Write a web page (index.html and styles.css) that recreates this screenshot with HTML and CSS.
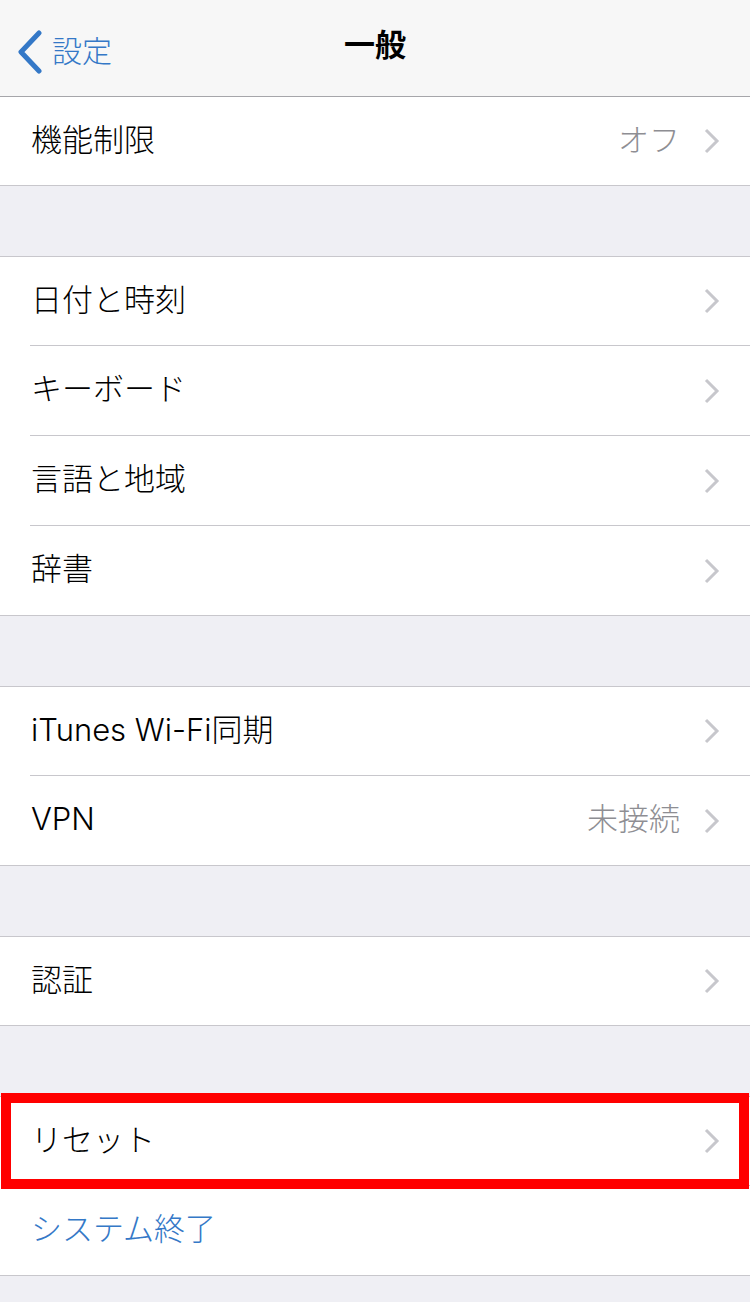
FILE: index.html
```html
<!DOCTYPE html>
<html lang="ja">
<head>
    <meta charset="UTF-8">
    <meta name="viewport" content="width=device-width, initial-scale=1.0">
    <title>一般</title>
    <link rel="stylesheet" href="styles.css">
</head>
<body>
    <header class="navbar">
        <a class="back" href="#">
            <svg class="back-icon" width="26" height="44" viewBox="0 0 26 44">
                <polyline points="22,3 4,22 22,41" fill="none" stroke="#3478c7" stroke-width="5" stroke-linecap="round" stroke-linejoin="round"/>
            </svg>
            <span>設定</span>
        </a>
        <h1 class="title">一般</h1>
    </header>

    <section class="group first">
        <div class="row">
            <div class="row-body">
                <span class="label">機能制限</span>
                <span class="value">オフ</span>
                <svg class="chevron" width="16" height="26" viewBox="0 0 16 26"><polyline points="2,2 13,13 2,24" fill="none" stroke="#c7c7cc" stroke-width="3"/></svg>
            </div>
        </div>
    </section>

    <section class="group">
        <div class="row">
            <div class="row-body">
                <span class="label">日付と時刻</span>
                <svg class="chevron" width="16" height="26" viewBox="0 0 16 26"><polyline points="2,2 13,13 2,24" fill="none" stroke="#c7c7cc" stroke-width="3"/></svg>
            </div>
        </div>
        <div class="row">
            <div class="row-body">
                <span class="label">キーボード</span>
                <svg class="chevron" width="16" height="26" viewBox="0 0 16 26"><polyline points="2,2 13,13 2,24" fill="none" stroke="#c7c7cc" stroke-width="3"/></svg>
            </div>
        </div>
        <div class="row">
            <div class="row-body">
                <span class="label">言語と地域</span>
                <svg class="chevron" width="16" height="26" viewBox="0 0 16 26"><polyline points="2,2 13,13 2,24" fill="none" stroke="#c7c7cc" stroke-width="3"/></svg>
            </div>
        </div>
        <div class="row">
            <div class="row-body">
                <span class="label">辞書</span>
                <svg class="chevron" width="16" height="26" viewBox="0 0 16 26"><polyline points="2,2 13,13 2,24" fill="none" stroke="#c7c7cc" stroke-width="3"/></svg>
            </div>
        </div>
    </section>

    <section class="group">
        <div class="row">
            <div class="row-body">
                <span class="label">iTunes Wi-Fi同期</span>
                <svg class="chevron" width="16" height="26" viewBox="0 0 16 26"><polyline points="2,2 13,13 2,24" fill="none" stroke="#c7c7cc" stroke-width="3"/></svg>
            </div>
        </div>
        <div class="row">
            <div class="row-body">
                <span class="label">VPN</span>
                <span class="value">未接続</span>
                <svg class="chevron" width="16" height="26" viewBox="0 0 16 26"><polyline points="2,2 13,13 2,24" fill="none" stroke="#c7c7cc" stroke-width="3"/></svg>
            </div>
        </div>
    </section>

    <section class="group">
        <div class="row">
            <div class="row-body">
                <span class="label">認証</span>
                <svg class="chevron" width="16" height="26" viewBox="0 0 16 26"><polyline points="2,2 13,13 2,24" fill="none" stroke="#c7c7cc" stroke-width="3"/></svg>
            </div>
        </div>
    </section>

    <section class="group">
        <div class="row">
            <div class="row-body">
                <span class="label">リセット</span>
                <svg class="chevron" width="16" height="26" viewBox="0 0 16 26"><polyline points="2,2 13,13 2,24" fill="none" stroke="#c7c7cc" stroke-width="3"/></svg>
            </div>
            <div class="marker"></div>
        </div>
        <div class="row">
            <div class="row-body">
                <span class="label link">システム終了</span>
            </div>
        </div>
    </section>
</body>
</html>
```

FILE: styles.css
```css
body {
    margin: 0;
    background-color: #efeff4;
    font-family: Inter, "Noto Sans CJK JP", sans-serif;
    font-weight: 300;
    color: #000;
}
.navbar {
    height: 96px;
    background-color: #f7f7f7;
    border-bottom: 1px solid #a6a6aa;
    display: flex;
    align-items: center;
    justify-content: center;
    position: relative;
}
.back {
    position: absolute;
    left: 17px;
    top: 30px;
    display: flex;
    align-items: center;
    gap: 9px;
    color: #3478c7;
    text-decoration: none;
    font-size: 30px;
    line-height: 44px;
}
.back span {
    margin-top: -2px;
}
.title {
    margin: 0;
    font-size: 31px;
    font-weight: bold;
    line-height: 1;
    margin-top: -8px;
}
.group {
    background-color: #fff;
    border-top: 1px solid #c8c7cc;
    border-bottom: 1px solid #c8c7cc;
    margin-top: 70px;
}
.group.first {
    margin-top: 0;
    border-top: none;
}
.row {
    height: 88px;
    padding-left: 30px;
    display: flex;
    position: relative;
}
.row + .row {
    height: 90px;
}
.row-body {
    flex: 1;
    display: flex;
    align-items: center;
    padding-right: 30px;
    padding-left: 1px;
}
.row + .row .row-body {
    border-top: 1px solid #c8c7cc;
}
.label {
    flex: 1;
    font-size: 31px;
    line-height: 1;
    margin-top: -4px;
}
.link {
    color: #3478c7;
}
.value {
    font-size: 31px;
    line-height: 1;
    color: #8e8e93;
    margin-right: 24px;
    margin-top: -4px;
}
.chevron {
    display: block;
}
.marker {
    position: absolute;
    z-index: 1;
    left: 1px;
    right: 1px;
    top: -4px;
    bottom: -4px;
    border: 10px solid #ff0000;
}
```
